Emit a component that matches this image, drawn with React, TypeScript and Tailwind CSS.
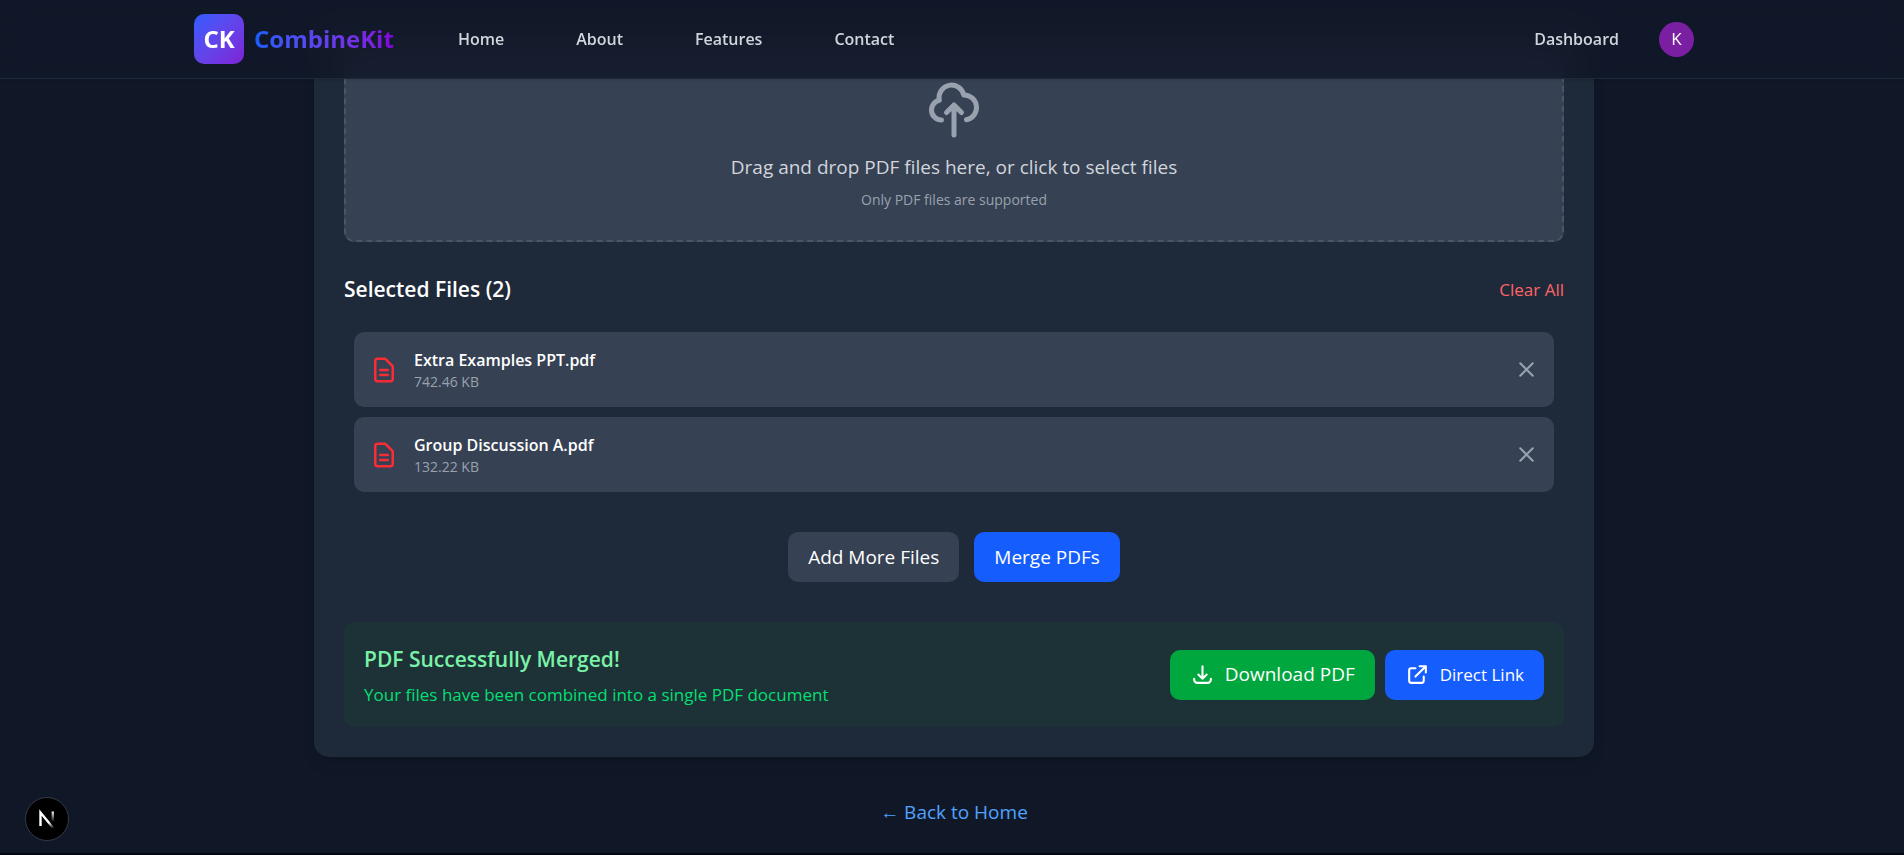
import { useState } from 'react';

interface PdfFile {
  id: string;
  name: string;
  size: string;
}

const navLinks = ['Home', 'About', 'Features', 'Contact'];

const initialFiles: PdfFile[] = [
  { id: '1', name: 'Extra Examples PPT.pdf', size: '742.46 KB' },
  { id: '2', name: 'Group Discussion A.pdf', size: '132.22 KB' },
];

function Icon({ d, className }: { d: string; className: string }) {
  return (
    <svg className={className} fill="none" stroke="currentColor" viewBox="0 0 24 24" aria-hidden="true">
      <path strokeLinecap="round" strokeLinejoin="round" strokeWidth={2} d={d} />
    </svg>
  );
}

const icons = {
  upload: 'M7 16a4 4 0 01-.88-7.903A5 5 0 1115.9 6L16 6a5 5 0 011 9.9M15 13l-3-3m0 0l-3 3m3-3v12',
  document:
    'M9 12h6m-6 4h6m2 5H7a2 2 0 01-2-2V5a2 2 0 012-2h5.586a1 1 0 01.707.293l5.414 5.414a1 1 0 01.293.707V19a2 2 0 01-2 2z',
  close: 'M6 18L18 6M6 6l12 12',
  download: 'M4 16v1a3 3 0 003 3h10a3 3 0 003-3v-1m-4-4l-4 4m0 0l-4-4m4 4V4',
  external: 'M10 6H6a2 2 0 00-2 2v10a2 2 0 002 2h10a2 2 0 002-2v-4M14 4h6m0 0v6m0-6L10 14',
};

function Header() {
  return (
    <header className="fixed inset-x-0 top-0 z-20 border-b border-gray-800 bg-gray-900/85 pl-1 shadow-sm backdrop-blur-md">
      <div className="mx-auto flex h-[78px] max-w-[1600px] items-center justify-between px-10">
        <div className="flex items-center">
          <a href="#home" className="flex items-center gap-[10px]">
            <span className="flex size-[50px] items-center justify-center rounded-[10px] bg-linear-to-br from-[#2b5cff] to-[#7e1fd6] text-[24px] font-bold text-white">
              CK
            </span>
            <span className="bg-linear-to-r from-[#155dfc] to-[#8200db] bg-clip-text text-[24px] font-bold text-transparent">
              CombineKit
            </span>
          </a>
          <nav className="ml-16 flex gap-[72px]">
            {navLinks.map((link) => (
              <a key={link} href={`#${link.toLowerCase()}`} className="text-[16px] font-semibold text-gray-300">
                {link}
              </a>
            ))}
          </nav>
        </div>
        <div className="flex items-center gap-10 pr-5">
          <a href="#dashboard" className="text-[16px] font-semibold text-gray-300">
            Dashboard
          </a>
          <button type="button" aria-label="Account" className="size-[35px] rounded-full bg-[#7b1fa2] text-[17px] text-white">
            K
          </button>
        </div>
      </div>
    </header>
  );
}

export default function App() {
  const [files, setFiles] = useState<PdfFile[]>(initialFiles);

  const removeFile = (id: string) => {
    setFiles(files.filter((f) => f.id !== id));
  };

  return (
    <div className="flex min-h-screen flex-col bg-gray-900 font-['Open_Sans',sans-serif]">
      <Header />

      <main className="flex-1 pt-[18px] pl-1">
        <div className="mx-auto max-w-[1280px] rounded-[15px] bg-gray-800 p-[30px] shadow-lg">
          <button
            type="button"
            className="flex w-full flex-col items-center rounded-[10px] border-2 border-dashed border-gray-600 bg-gray-700 pt-[30px] pb-[28px]"
          >
            <Icon d={icons.upload} className="size-[60px] text-gray-400" />
            <span className="mt-[12px] text-[19px] leading-[30px] text-gray-300">
              Drag and drop PDF files here, or click to select files
            </span>
            <span className="mt-[6px] text-[14px] leading-[24px] text-gray-400">Only PDF files are supported</span>
          </button>

          <div className="mt-[30px] flex items-center justify-between">
            <h2 className="text-[21px] leading-[35px] font-semibold text-white">Selected Files ({files.length})</h2>
            <button type="button" onClick={() => setFiles([])} className="text-[17px] text-red-400">
              Clear All
            </button>
          </div>

          <ul className="mt-[25px] space-y-[10px] px-[10px]">
            {files.map((file) => (
              <li key={file.id} className="flex h-[75px] items-center justify-between rounded-[10px] bg-gray-700 px-[15px]">
                <div className="flex items-center gap-[15px]">
                  <Icon d={icons.document} className="size-[30px] text-red-500" />
                  <div>
                    <p className="text-[16px] leading-[24px] font-semibold text-white">{file.name}</p>
                    <p className="text-[14px] leading-[20px] text-gray-400">{file.size}</p>
                  </div>
                </div>
                <button type="button" aria-label={`Remove ${file.name}`} onClick={() => removeFile(file.id)}>
                  <Icon d={icons.close} className="size-[25px] text-gray-400" />
                </button>
              </li>
            ))}
          </ul>

          <div className="mt-10 flex justify-center gap-[15px]">
            <button type="button" className="h-[50px] rounded-[10px] bg-gray-700 px-5 text-[19px] text-white">
              Add More Files
            </button>
            <button type="button" className="h-[50px] rounded-[10px] bg-blue-600 px-5 text-[19px] text-white">
              Merge PDFs
            </button>
          </div>

          <div className="mt-10 flex h-[105px] items-center justify-between rounded-[10px] bg-[#1c3237] px-5">
            <div>
              <h3 className="text-[21px] leading-[35px] font-semibold text-green-300">PDF Successfully Merged!</h3>
              <p className="mt-[5px] text-[17px] leading-[25px] text-green-400">
                Your files have been combined into a single PDF document
              </p>
            </div>
            <div className="flex gap-[10px]">
              <button
                type="button"
                className="flex h-[50px] items-center gap-[10px] rounded-[10px] bg-green-600 px-5 text-[19px] text-white"
              >
                <Icon d={icons.download} className="size-[25px]" />
                Download PDF
              </button>
              <a
                href="#direct-link"
                className="flex h-[50px] items-center gap-[10px] rounded-[10px] bg-blue-600 px-5 text-[17px] text-white"
              >
                <Icon d={icons.external} className="size-[25px]" />
                Direct Link
              </a>
            </div>
          </div>
        </div>

        <div className="mt-10 text-center">
          <a href="#home" className="text-[19px] leading-[30px] text-blue-400">
            ← Back to Home
          </a>
        </div>
      </main>

      <footer className="h-0.5 bg-gray-950" />

      <button
        type="button"
        aria-label="Open Next.js Dev Tools"
        className="fixed bottom-[14px] left-[25px] z-30 flex size-[44px] items-center justify-center rounded-full border border-[#343a46] bg-black"
      >
        <svg className="h-5 w-5" viewBox="0 0 20 20" fill="none" aria-hidden="true">
          <defs>
            <linearGradient id="diagonal" x1="9" y1="9" x2="17" y2="19" gradientUnits="userSpaceOnUse">
              <stop offset="0.4" stopColor="white" />
              <stop offset="1" stopColor="white" stopOpacity="0" />
            </linearGradient>
            <linearGradient id="stem" x1="15.5" y1="2" x2="15.5" y2="13" gradientUnits="userSpaceOnUse">
              <stop stopColor="white" />
              <stop offset="1" stopColor="white" stopOpacity="0" />
            </linearGradient>
          </defs>
          <path d="M3.5 17V3.5L17 20" stroke="url(#diagonal)" strokeWidth="2.4" />
          <path d="M15.8 2.5V13" stroke="url(#stem)" strokeWidth="2.4" />
        </svg>
      </button>
    </div>
  );
}
